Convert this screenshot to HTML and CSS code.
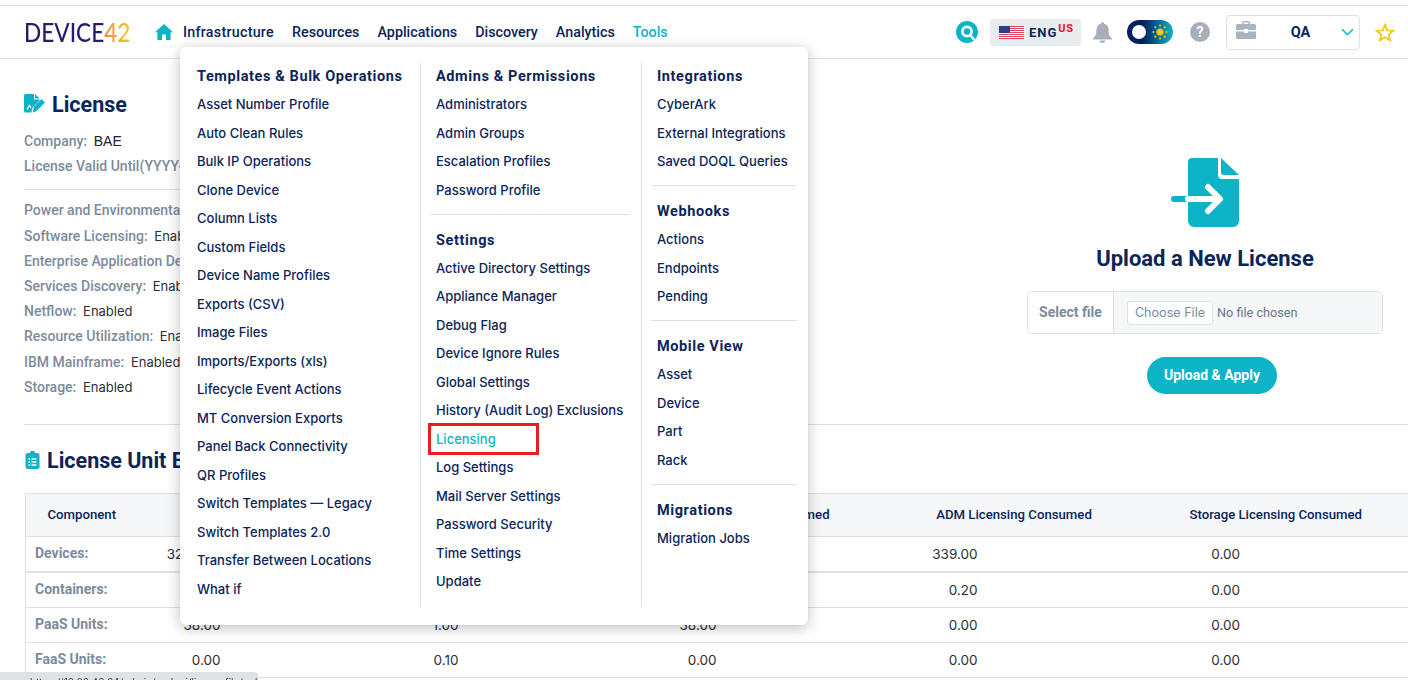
FILE: index.html
```html
<!DOCTYPE html>
<html lang="en">
<head>
    <meta charset="UTF-8">
    <meta name="viewport" content="width=device-width, initial-scale=1.0">
    <title>Device42 - License</title>
    <link rel="stylesheet" href="styles.css">
</head>
<body>
    <header class="topbar">
        <div class="logo"><div class="logo-text"><span class="logo-name">DEVICE</span><span class="logo-num">42</span></div></div>
        <nav class="main-nav">
            <svg class="home-icon" viewBox="0 0 18 16"><path fill="#0db4c8" d="M9 0 L18 8.2 L15.6 8.2 L15.6 16 L11 16 L11 10.5 L7 10.5 L7 16 L2.4 16 L2.4 8.2 L0 8.2 Z"/></svg>
            <a href="#" class="first">Infrastructure</a>
            <a href="#">Resources</a>
            <a href="#">Applications</a>
            <a href="#">Discovery</a>
            <a href="#">Analytics</a>
            <a href="#" class="active">Tools</a>
        </nav>
        <div class="top-tools">
            <svg class="search-icon" viewBox="0 0 22 22">
                <circle cx="11" cy="11" r="11" fill="#0db4c8"/>
                <circle cx="11" cy="10.5" r="4.6" fill="none" stroke="#fff" stroke-width="2.6"/>
                <path d="M14 14 L18.5 19" stroke="#fff" stroke-width="2.4"/>
            </svg>
            <div class="lang">
                <svg class="flag" viewBox="0 0 25 13">
                    <rect width="25" height="13" fill="#fff"/>
                    <path d="M0 .5H25M0 2.5H25M0 4.5H25M0 6.5H25M0 8.5H25M0 10.5H25M0 12.5H25" stroke="#e0405a" stroke-width="1"/>
                    <rect width="11" height="7" fill="#2b3f8c"/>
                </svg>
                <span class="lang-name">ENG</span><span class="lang-region">US</span>
            </div>
            <svg class="bell-icon" viewBox="0 0 19 21"><path fill="#a9afb8" d="M9.5 0a1.6 1.6 0 0 1 1.6 1.7C14 2.4 15.6 5 15.6 8c0 4.5 1 6.300 3.400 8.500V17.500H0V16.500C2.400 14.300 3.400 12.500 3.400 8C3.400 5 5 2.400 7.900 1.700A1.600 1.600 0 0 1 9.500 0ZM6.800 18.500H12.200A2.700 2.500 0 0 1 6.800 18.500Z"/></svg>
            <div class="theme-toggle">
                <span class="toggle-knob"></span>
                <svg class="sun-icon" viewBox="0 0 20 20">
                    <circle cx="10" cy="10" r="4.500" fill="#ffc61a"/>
                    <g fill="#ffc61a">
                        <circle cx="10" cy="1.800" r="1.300"/><circle cx="10" cy="18.200" r="1.300"/>
                        <circle cx="1.800" cy="10" r="1.300"/><circle cx="18.200" cy="10" r="1.300"/>
                        <circle cx="4.200" cy="4.200" r="1.300"/><circle cx="15.800" cy="4.200" r="1.300"/>
                        <circle cx="4.200" cy="15.800" r="1.300"/><circle cx="15.800" cy="15.800" r="1.300"/>
                    </g>
                </svg>
            </div>
            <div class="help-icon">?</div>
            <div class="org-select">
                <svg class="case-icon" viewBox="0 0 20 18">
                    <path fill="#a9b4c2" d="M6 3V1.500A1.500 1.500 0 0 1 7.500 0h5A1.500 1.500 0 0 1 14 1.500V3h4.500A1.500 1.500 0 0 1 20 4.500V9H12V8H8V9H0V4.500A1.500 1.500 0 0 1 1.500 3ZM7.500 1.500V3h5V1.500ZM0 10.500H8V12h4V10.500H20V16.500A1.500 1.500 0 0 1 18.500 18H1.500A1.500 1.500 0 0 1 0 16.500Z"/>
                </svg>
                <span class="org-name">QA</span>
                <svg class="chevron" viewBox="0 0 12 7"><path d="M1 1 L6 6 L11 1" fill="none" stroke="#0db4c8" stroke-width="1.400"/></svg>
            </div>
            <svg class="star-icon" viewBox="0 0 20 19"><path fill="none" stroke="#ffc61a" stroke-width="1.800" d="M10 1.800 L12.300 7.300 L18.200 7.700 L13.600 11.500 L15.100 17.300 L10 14.200 L4.900 17.300 L6.400 11.500 L1.800 7.700 L7.700 7.300 Z"/></svg>
        </div>
    </header>

    <div class="tools-menu">
        <div class="menu-col">
            <h4>Templates &amp; Bulk Operations</h4>
            <ul>
                <li>Asset Number Profile</li>
                <li>Auto Clean Rules</li>
                <li>Bulk IP Operations</li>
                <li>Clone Device</li>
                <li>Column Lists</li>
                <li>Custom Fields</li>
                <li>Device Name Profiles</li>
                <li>Exports (CSV)</li>
                <li>Image Files</li>
                <li>Imports/Exports (xls)</li>
                <li>Lifecycle Event Actions</li>
                <li>MT Conversion Exports</li>
                <li>Panel Back Connectivity</li>
                <li>QR Profiles</li>
                <li>Switch Templates — Legacy</li>
                <li>Switch Templates 2.0</li>
                <li>Transfer Between Locations</li>
                <li>What if</li>
            </ul>
        </div>
        <div class="menu-col">
            <h4>Admins &amp; Permissions</h4>
            <ul>
                <li>Administrators</li>
                <li>Admin Groups</li>
                <li>Escalation Profiles</li>
                <li>Password Profile</li>
            </ul>
            <hr>
            <h4>Settings</h4>
            <ul>
                <li>Active Directory Settings</li>
                <li>Appliance Manager</li>
                <li>Debug Flag</li>
                <li>Device Ignore Rules</li>
                <li>Global Settings</li>
                <li>History (Audit Log) Exclusions</li>
                <li class="current">Licensing<span class="red-mark"></span></li>
                <li>Log Settings</li>
                <li>Mail Server Settings</li>
                <li>Password Security</li>
                <li>Time Settings</li>
                <li>Update</li>
            </ul>
        </div>
        <div class="menu-col">
            <h4>Integrations</h4>
            <ul>
                <li>CyberArk</li>
                <li>External Integrations</li>
                <li>Saved DOQL Queries</li>
            </ul>
            <hr>
            <h4>Webhooks</h4>
            <ul>
                <li>Actions</li>
                <li>Endpoints</li>
                <li>Pending</li>
            </ul>
            <hr>
            <h4>Mobile View</h4>
            <ul>
                <li>Asset</li>
                <li>Device</li>
                <li>Part</li>
                <li>Rack</li>
            </ul>
            <hr>
            <h4>Migrations</h4>
            <ul>
                <li>Migration Jobs</li>
            </ul>
        </div>
    </div>

    <main class="content">
        <section class="license-top">
            <div class="license-info">
                <h2 class="section-title">
                    <svg class="title-icon" viewBox="0 0 22 20">
                        <path fill="#0db4c8" d="M1.500 0H10V5.500H15.500V6.500L8.500 13.500L7.500 18.500H1.500A1.500 1.500 0 0 1 0 17V1.500A1.500 1.500 0 0 1 1.500 0Z"/>
                        <path fill="#0db4c8" d="M11 0L15.500 4.500H11Z"/>
                        <path fill="#0db4c8" d="M17.500 5L21 8.500L12 17.500L8.800 18.500L9.600 13Z"/>
                        <path d="M3 15.500L5.500 11.500L7 14" fill="none" stroke="#fff" stroke-width="1.200"/>
                    </svg>
                    License
                </h2>
                <p class="info-row company"><b>Company:</b> <span class="arial">BAE</span></p>
                <p class="info-row"><b>License Valid Until(YYYY-MM-DD):</b> 2025-12-31</p>
                <hr class="info-line">
                <p class="info-row"><b>Power and Environmental:</b> Enabled</p>
                <p class="info-row"><b>Software Licensing:</b> Enabled</p>
                <p class="info-row"><b>Enterprise Application Dependency Mapping:</b> Enabled</p>
                <p class="info-row"><b>Services Discovery:</b> Enabled</p>
                <p class="info-row"><b>Netflow:</b> Enabled</p>
                <p class="info-row"><b>Resource Utilization:</b> Enabled</p>
                <p class="info-row"><b>IBM Mainframe:</b> Enabled</p>
                <p class="info-row"><b>Storage:</b> Enabled</p>
            </div>
            <div class="upload">
                <svg class="upload-icon" viewBox="0 0 68 69">
                    <path fill="#0db4c8" d="M21 0H47V17A4 4 0 0 0 51 21H68V63A6 6 0 0 1 62 69H23A6 6 0 0 1 17 63V4A4 4 0 0 1 21 0Z"/>
                    <path fill="#0db4c8" d="M50 0L68 17H53A3 3 0 0 1 50 14Z"/>
                    <path d="M3 41H17" stroke="#0db4c8" stroke-width="6" stroke-linecap="round"/>
                    <path d="M17 41H48M37 29L49 41L37 53" fill="none" stroke="#fff" stroke-width="6" stroke-linecap="round" stroke-linejoin="round"/>
                </svg>
                <h2 class="upload-title">Upload a New License</h2>
                <div class="file-group">
                    <span class="file-label">Select file</span>
                    <div class="file-field">
                        <span class="file-button">Choose File</span>
                        <span class="file-none">No file chosen</span>
                    </div>
                </div>
                <button class="apply-button">Upload &amp; Apply</button>
            </div>
        </section>

        <section class="units">
            <h2 class="section-title units-title">
                <svg class="title-icon clip" viewBox="0 0 14 18">
                    <path fill="#0db4c8" d="M2 2H4.500A2.500 2.500 0 0 1 9.500 2H12A2 2 0 0 1 14 4V16A2 2 0 0 1 12 18H2A2 2 0 0 1 0 16V4A2 2 0 0 1 2 2Z"/>
                    <path d="M3 8H4.500M6 8H11M3 11H4.500M6 11H11M3 14H4.500M6 14H11" stroke="#fff" stroke-width="1.300"/>
                </svg>
                License Unit Breakdown
            </h2>
            <table class="units-table">
                <colgroup>
                    <col class="c1"><col class="c2"><col class="c3"><col class="c4"><col class="c5"><col class="c6">
                </colgroup>
                <thead>
                    <tr>
                        <th class="name-head">Component</th>
                        <th>Licensed Units</th>
                        <th>Units Consumed</th>
                        <th class="power-head">Power Licensing Consumed</th>
                        <th>ADM Licensing Consumed</th>
                        <th>Storage Licensing Consumed</th>
                    </tr>
                </thead>
                <tbody>
                    <tr class="thick">
                        <td>Devices:</td><td>3200.00</td><td>339.00</td><td>339.00</td><td>339.00</td><td>0.00</td>
                    </tr>
                    <tr>
                        <td>Containers:</td><td>110.00</td><td>0.20</td><td>0.20</td><td>0.20</td><td>0.00</td>
                    </tr>
                    <tr>
                        <td>PaaS Units:</td><td>38.00</td><td>1.00</td><td>38.00</td><td>0.00</td><td>0.00</td>
                    </tr>
                    <tr>
                        <td>FaaS Units:</td><td>0.00</td><td>0.10</td><td>0.00</td><td>0.00</td><td>0.00</td>
                    </tr>
                </tbody>
            </table>
        </section>
    </main>

    <div class="status-bar">https://10.20.40.24/admin/rackraj/licensefile/upload</div>
</body>
</html>
```

FILE: styles.css
```css
html, body {
    height: 680px;
    overflow: hidden;
}

body {
    margin: 0;
    padding-top: 5px;
    box-sizing: border-box;
    font-family: Inter, Arial, sans-serif;
    font-size: 13px;
    color: #2b2f36;
    background: #fff;
}

/* top bar */
.topbar {
    display: flex;
    align-items: center;
    height: 52px;
    padding: 0 13px 0 24px;
    border-top: 1px solid #dfe1e5;
    border-bottom: 1px solid #dfe1e5;
}

.logo {
    width: 131px;
}

.logo-text {
    font-family: Lato, sans-serif;
    font-weight: 500;
    font-size: 26px;
    line-height: 30px;
    white-space: nowrap;
    transform: scaleX(0.87);
    transform-origin: left center;
}

.logo-name {
    color: #2d1a6e;
}

.logo-num {
    background: linear-gradient(90deg, #f5893a, #fdc11f);
    -webkit-background-clip: text;
    background-clip: text;
    color: transparent;
}

.main-nav {
    display: flex;
    align-items: center;
    gap: 18px;
}

.main-nav a {
    font-family: Roboto, sans-serif;
    font-weight: 500;
    font-size: 14.3px;
    color: #0b2559;
    text-decoration: none;
}

.main-nav a.first {
    width: 91px;
    white-space: nowrap;
    letter-spacing: 0.25px;
}

.main-nav a.active {
    color: #0db4c8;
}

.home-icon {
    width: 18px;
    height: 16px;
    margin-right: -8px;
}

.top-tools {
    display: flex;
    align-items: center;
    margin-left: auto;
}

.search-icon {
    width: 22px;
    height: 22px;
}

.lang {
    display: flex;
    align-items: center;
    width: 91px;
    height: 27px;
    box-sizing: border-box;
    margin-left: 12px;
    padding-left: 9px;
    background: #e9ecef;
    border-radius: 3px;
    font-family: Roboto, sans-serif;
    font-weight: 700;
}

.flag {
    width: 25px;
    height: 13px;
    margin-right: 5px;
}

.lang-name {
    color: #0b2559;
    font-size: 13px;
    letter-spacing: 1px;
}

.lang-region {
    color: #f0102e;
    font-size: 11px;
    letter-spacing: 0.6px;
    margin: -7px 0 0 1px;
}

.bell-icon {
    width: 19px;
    height: 21px;
    margin-left: 12px;
}

.theme-toggle {
    display: flex;
    align-items: center;
    justify-content: space-between;
    width: 46px;
    height: 24px;
    box-sizing: border-box;
    margin-left: 15px;
    padding: 0 5px;
    border-radius: 12px;
    background: linear-gradient(90deg, #04205f 35%, #0db4c8);
}

.toggle-knob {
    width: 14px;
    height: 14px;
    border-radius: 50%;
    background: #fff;
}

.sun-icon {
    width: 16px;
    height: 16px;
}

.help-icon {
    width: 20px;
    height: 20px;
    margin-left: 17px;
    border-radius: 50%;
    background: #a9afb8;
    color: #fff;
    font-family: Roboto, sans-serif;
    font-weight: 700;
    font-size: 14px;
    line-height: 20px;
    text-align: center;
}

.org-select {
    display: flex;
    align-items: center;
    justify-content: space-between;
    width: 134px;
    height: 35px;
    box-sizing: border-box;
    margin-left: 16px;
    padding: 0 5px 0 9px;
    border: 1px solid #dfe1e5;
    border-radius: 4px;
}

.case-icon {
    width: 20px;
    height: 18px;
    margin-top: -5px;
}

.org-name {
    font-family: Roboto, sans-serif;
    font-weight: 700;
    font-size: 14.5px;
    color: #0b2559;
    margin-left: 4px;
}

.chevron {
    width: 13px;
    height: 8px;
}

.star-icon {
    width: 20px;
    height: 19px;
    margin-left: 15px;
}

/* tools dropdown */
.tools-menu {
    position: absolute;
    left: 180px;
    top: 47px;
    z-index: 5;
    display: flex;
    width: 628px;
    height: 578px;
    box-sizing: border-box;
    padding: 16px 0 18px 10px;
    background: #fff;
    border-radius: 6px;
    box-shadow: 0 3px 14px rgba(0, 0, 0, 0.25);
}

.menu-col {
    width: 221px;
    box-sizing: border-box;
    padding: 0 11px 0 9px;
    border-right: 1px solid #dfe1e5;
}

.menu-col:first-child {
    width: 231px;
    padding: 0 0 0 7px;
}

.menu-col:last-child {
    flex: 1;
    border-right: none;
}

.menu-col h4 {
    margin: 0;
    padding-left: 6px;
    font-family: Roboto, sans-serif;
    font-weight: 700;
    font-size: 14.5px;
    line-height: 27px;
    letter-spacing: 0.6px;
    color: #0b2559;
    white-space: nowrap;
}

.menu-col:first-child h4,
.menu-col:first-child li {
    padding-left: 0;
}

.menu-col ul {
    list-style: none;
    margin: 0;
    padding: 0;
}

.menu-col li {
    position: relative;
    padding-left: 6px;
    font-weight: 500;
    font-size: 13px;
    line-height: 28.5px;
    color: #0b2559;
    white-space: nowrap;
}

.menu-col li.current {
    color: #0db4c8;
}

.menu-col hr {
    margin: 9.5px 0 12px;
    border: none;
    border-top: 1px solid #dfe1e5;
}

.red-mark {
    position: absolute;
    left: -2px;
    top: -2px;
    width: 111px;
    height: 32px;
    box-sizing: border-box;
    border: 3px solid #ec1c24;
}

/* page content */
.content {
    padding-left: 24px;
}

.license-top {
    display: flex;
    justify-content: space-between;
    height: 366px;
    box-sizing: border-box;
    padding-right: 25px;
    border-bottom: 1px solid #dfe1e5;
}

.license-info {
    width: 560px;
}

.section-title {
    display: flex;
    align-items: center;
    gap: 6px;
    margin: 0;
    font-family: Roboto, sans-serif;
    font-weight: 700;
    font-size: 21.5px;
    color: #0b2559;
}

.license-info .section-title {
    height: 30px;
    margin: 30px 0 10px;
}

.title-icon {
    width: 22px;
    height: 20px;
}

.title-icon.clip {
    width: 17px;
    height: 18px;
}

.info-row {
    margin: 0;
    line-height: 25.2px;
    white-space: nowrap;
}

.info-row b {
    font-family: Roboto, sans-serif;
    font-weight: 500;
    font-size: 14px;
    color: #7c8b9c;
    margin-right: 3px;
}

.arial {
    font-family: "Liberation Sans", Arial, sans-serif;
    font-size: 14px;
    color: #222;
}

.info-line {
    margin: 10px 0 8px;
    border: none;
    border-top: 1px solid #dfe1e5;
}

.upload {
    display: flex;
    flex-direction: column;
    align-items: center;
    width: 356px;
    padding-top: 99px;
}

.upload-icon {
    width: 68px;
    height: 69px;
}

.upload-title {
    margin: 18px 0 18px;
    font-family: Roboto, sans-serif;
    font-weight: 700;
    font-size: 22px;
    line-height: 28px;
    color: #0b2559;
}

.file-group {
    display: flex;
    width: 100%;
    height: 43px;
    box-sizing: border-box;
    border: 1px solid #dfe1e5;
    border-radius: 5px;
    overflow: hidden;
}

.file-label {
    width: 85px;
    border-right: 1px solid #dfe1e5;
    font-family: Roboto, sans-serif;
    font-weight: 700;
    font-size: 14px;
    line-height: 41px;
    text-align: center;
    color: #7c8b9c;
}

.file-field {
    display: flex;
    align-items: center;
    flex: 1;
    padding-left: 13px;
    background: #f6f7f9;
    color: #6d7680;
    font-family: Roboto, sans-serif;
    font-size: 12.7px;
}

.file-button {
    width: 84px;
    height: 22px;
    margin-right: 4px;
    background: #fff;
    border: 1px solid #dfe1e5;
    border-radius: 3px;
    font-family: Inter, sans-serif;
    font-size: 12.6px;
    line-height: 22px;
    text-align: center;
    color: #7c8b9c;
}

.apply-button {
    width: 130px;
    height: 37px;
    margin: 23px 0 0 14px;
    padding: 0 0 2px;
    border: none;
    border-radius: 19px;
    background: #0db4c8;
    color: #fff;
    font-family: Roboto, sans-serif;
    font-weight: 700;
    font-size: 14px;
}

/* unit table */
.units-title {
    margin-top: 20px;
    height: 30px;
}

.units-table {
    table-layout: fixed;
    width: 1383px;
    margin: 18px 0 0 1px;
    border-collapse: collapse;
    border: 1px solid #dfe1e5;
}

.c1 { width: 115px; }
.c2 { width: 248px; }
.c3 { width: 238px; }
.c4 { width: 258px; }
.c5 { width: 259px; }
.c6 { width: 265px; }

.units-table th {
    height: 40px;
    padding: 0 0 2px;
    background: #f6f7f9;
    border-bottom: 1px solid #dfe1e5;
    font-family: Roboto, sans-serif;
    font-weight: 500;
    font-size: 13.2px;
    color: #0b2559;
    white-space: nowrap;
}

.units-table th.name-head {
    padding-right: 3px;
}

.units-table th.power-head {
    padding-right: 16px;
}

.units-table td {
    height: 34px;
    padding: 0 168px 0 0;
    border-bottom: 1px solid #dfe1e5;
    text-align: right;
    font-size: 13.5px;
    white-space: nowrap;
}

.units-table td:nth-child(5) {
    padding-right: 166px;
}

.units-table td:first-child {
    height: 32px;
    padding: 0 0 2px 9px;
    text-align: left;
    font-family: Roboto, sans-serif;
    font-weight: 700;
    font-size: 14px;
    color: #7c8b9c;
}

.units-table tr.thick td {
    border-bottom-width: 2px;
}

.status-bar {
    position: fixed;
    left: 0;
    bottom: 0;
    z-index: 6;
    width: 228px;
    height: 4px;
    padding: 4px 0 0 30px;
    overflow: hidden;
    background: #dfe1e5;
    border-top-right-radius: 4px;
    font-size: 10px;
    line-height: 12px;
    color: #3a3f46;
    white-space: nowrap;
}
```
